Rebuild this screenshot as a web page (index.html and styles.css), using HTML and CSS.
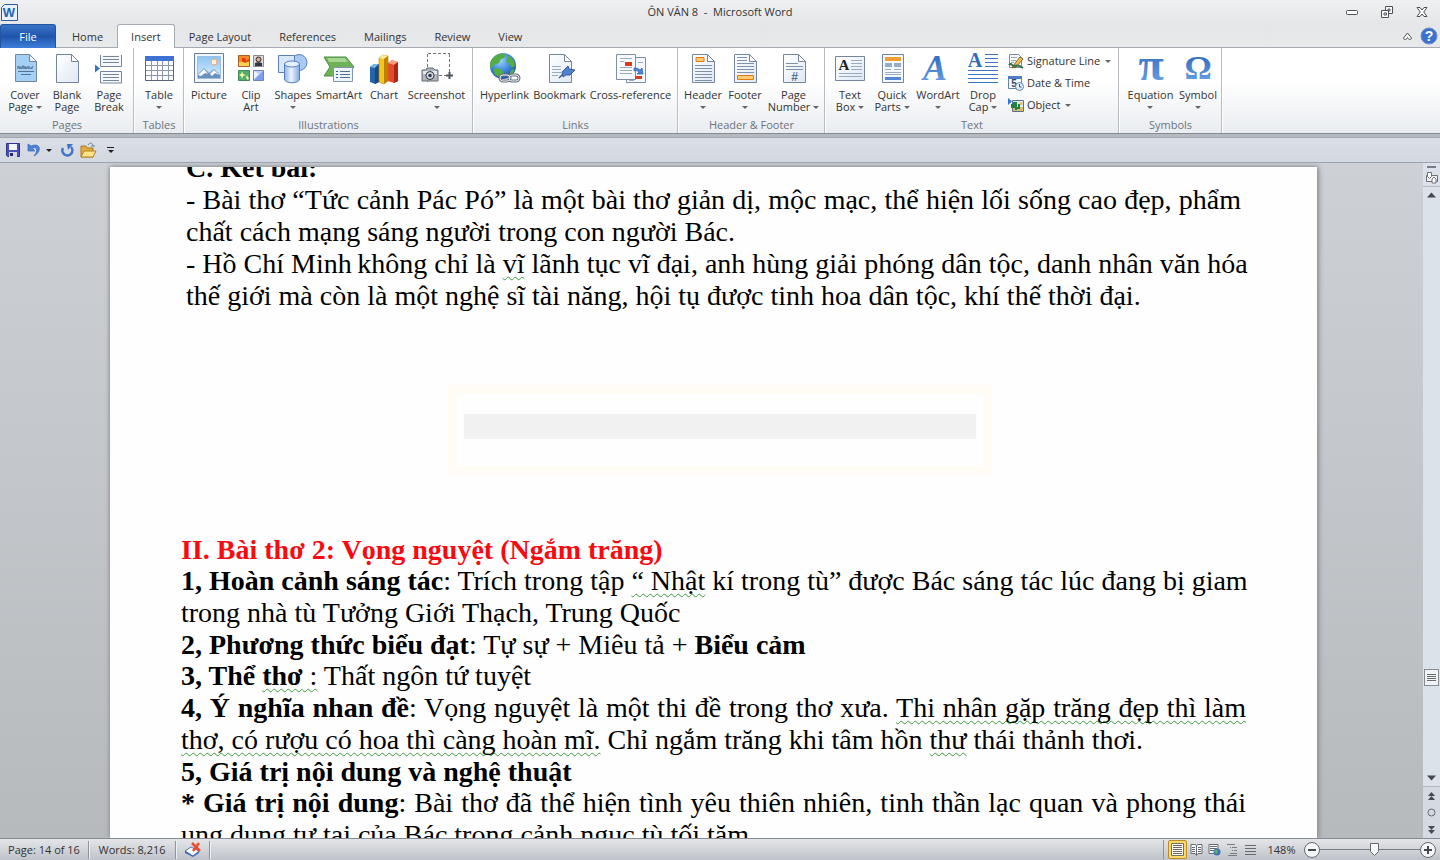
FILE: index.html
```html
<!DOCTYPE html>
<html lang="vi">
<head>
<meta charset="utf-8">
<title>ÔN VĂN 8 - Microsoft Word</title>
<link rel="stylesheet" href="styles.css">
</head>
<body>
<svg class="defs" aria-hidden="true">
  <defs>
    <linearGradient id="paper" x1="0" y1="0" x2="1" y2="1"><stop offset="0" stop-color="#fff"/><stop offset="1" stop-color="#dfe8f5"/></linearGradient>
    <linearGradient id="sky" x1="0" y1="0" x2="0" y2="1"><stop offset="0" stop-color="#8cc4f2"/><stop offset="1" stop-color="#d9efff"/></linearGradient>
    <linearGradient id="glyph" x1="0" y1="0" x2="0" y2="1"><stop offset="0" stop-color="#235fb8"/><stop offset="1" stop-color="#6fa8e8"/></linearGradient>
    <linearGradient id="steel" x1="0" y1="0" x2="1" y2="0"><stop offset="0" stop-color="#8db6ec"/><stop offset=".45" stop-color="#edf5ff"/><stop offset="1" stop-color="#7fa9e2"/></linearGradient>
    <radialGradient id="globe" cx=".4" cy=".3" r=".8"><stop offset="0" stop-color="#9cd2ff"/><stop offset=".5" stop-color="#3e86dc"/><stop offset="1" stop-color="#123e9a"/></radialGradient>
    <g id="sheet"><path d="M5.500 1.500h15l7 7v21h-22z" fill="url(#paper)" stroke="#75859c"/><path d="M20.500 1.500v7h7z" fill="#fff" stroke="#75859c"/></g>
  </defs>
</svg>

<header class="titlebar">
  <svg class="app-icon" width="17" height="17" viewBox="0 0 17 17"><path d="M3.500.5h13v16h-16v-13z" fill="#e9f2fc" stroke="#2a5c9e"/><text x="8" y="13" class="app-letter">W</text></svg>
  <h1 class="title">ÔN VĂN 8&nbsp; -&nbsp; Microsoft Word</h1>
  <div class="window-buttons">
    <button aria-label="Minimize"><svg width="14" height="14"><rect x="1.500" y="5.500" width="11" height="4" rx="1" fill="#fff" stroke="#4c5058"/></svg></button>
    <button aria-label="Restore"><svg width="14" height="14"><path d="M5.500 1.500h7v7h-7z" fill="#fff" stroke="#4c5058"/><path d="M8 4h2v2H8z" fill="#fff" stroke="#4c5058"/><path d="M1.500 5.500h7v7h-7z" fill="#fff" stroke="#4c5058"/><path d="M4 8h2.500v2H4z" fill="#fff" stroke="#4c5058"/></svg></button>
    <button aria-label="Close"><svg width="14" height="14"><path d="M2 2.500h3L7 5l2-2.500h3L8.700 7l3.300 4.500H9L7 9l-2 2.500H2L5.300 7z" fill="#fff" stroke="#4c5058"/></svg></button>
  </div>
</header>

<nav class="tabs">
  <button class="tab file">File</button>
  <button class="tab">Home</button>
  <button class="tab active">Insert</button>
  <button class="tab">Page Layout</button>
  <button class="tab">References</button>
  <button class="tab">Mailings</button>
  <button class="tab">Review</button>
  <button class="tab">View</button>
  <div class="tab-tools">
    <button aria-label="Minimize the Ribbon"><svg width="11" height="10"><path d="M1.500 7 5.500 2l4 5c0 2-3 2-4-.5C4.500 9 1.500 9 1.500 7z" fill="#fff" stroke="#4c5058"/></svg></button>
    <button aria-label="Help"><svg width="18" height="18"><circle cx="9" cy="9" r="8" fill="#3c72cf" stroke="#6d8cc2"/><text x="9" y="14" class="help-mark">?</text></svg></button>
  </div>
</nav>

<section class="ribbon">
  <div class="group">
    <div class="tools">
      <button class="tool"><svg width="32" height="32"><path d="M6.500 1.500h14l7 7v20h-21z" fill="#a4d0f6" stroke="#75859c"/><path d="M20.500 1.500v7h7z" fill="#eef6ff" stroke="#75859c"/><path d="M9 16v-3l2 3v-3m2 3v-3h2v3m1-3 1 3 2-3m1 3v-3m2 3 2-3m-14 2h14" fill="none" stroke="#54758f"/><path d="M9 18.500h16M12 21.500h10" stroke="#54758f"/></svg><span>Cover<br>Page <i class="caret"></i></span></button>
      <button class="tool"><svg width="32" height="32"><use href="#sheet"/></svg><span>Blank<br>Page</span></button>
      <button class="tool"><svg width="32" height="32"><path d="M2 11.500v8l5-4z" fill="#3873c4"/><path d="M7.500 2v11.500h21V2M7.500 30V18.500h21V30z" fill="#f5f9ff" stroke="#75859c"/><path d="M10 3.500h16M10 6.500h16M10 9.500h16M10 21.500h16M10 24.500h16M10 27.500h16" stroke="#75859c"/></svg><span>Page<br>Break</span></button>
    </div>
    <h2>Pages</h2>
  </div>
  <div class="group">
    <div class="tools">
      <button class="tool"><svg width="32" height="32"><path d="M2.500 3.500h28v24h-28z" fill="#fafcff" stroke="#56657c"/><path d="M2 3h29v5H2z" fill="#3f73d1"/><path d="M3 12.500h27M3 17.500h27M3 22.500h27M8.500 8v19M14.500 8v19M19.500 8v19M25.500 8v19" stroke="#8b98ac"/></svg><span>Table<br><i class="caret"></i></span></button>
    </div>
    <h2>Tables</h2>
  </div>
  <div class="group">
    <div class="tools">
      <button class="tool"><svg width="32" height="32"><path d="M1.500.5h29v29h-29z" fill="#f1f6fb" stroke="#6a7f97"/><path d="M4.500 3.500h23v22h-23z" fill="url(#sky)" stroke="#9ac0e4"/><circle cx="21" cy="9" r="3" fill="#fff1df" stroke="#eea476"/><path d="M5 25v-4l6-6 5 5 5-4 6 6v3z" fill="#6a91bd"/><path d="m5 22 6-6 4 5-3-1-4 3zM17 21l4-4 5 5-4-2-3 3z" fill="#fff"/></svg><span>Picture</span></button>
      <button class="tool"><svg width="32" height="32"><path d="M3.500 2.500h11v11h-11z" fill="#f48b22" stroke="#a85e28"/><path d="M4 9h10v4H4z" fill="#ffd04a"/><path d="M7 5h3l1 3 3-2v2l-4 2-3-2z" fill="#e7360e"/><path d="M18.500 2.500h10v11h-10z" fill="#d8dce2" stroke="#858b95"/><circle cx="23.500" cy="6.500" r="2.500" fill="#e9a57b" stroke="#2f2f36"/><path d="M20 13v-3l3.500-1L27 10v3z" fill="#34363d"/><path d="M3.500 17.500h11v10h-11z" fill="#53ab6d" stroke="#3f8b58"/><path d="m7 18 1 3 3 1-3 1-1 3-1-3-2-1 2-1zM12 22l1 2 1 1-1 2-2-2z" fill="#fff59b"/><path d="M18.500 17.500h10v10h-10z" fill="#bccdfa" stroke="#6d84bd"/><path d="m19 27 9-9v9z" fill="#7e9ded"/><path d="m19 18 5 3-5 5z" fill="#eff4ff"/></svg><span>Clip<br>Art</span></button>
      <button class="tool"><svg width="32" height="32"><circle cx="22" cy="9.500" r="8" fill="#a9caf3" stroke="#5980bb"/><path d="M1.500 2.500h16v17h-16z" fill="#d8e8fb" stroke="#5980bb"/><path d="M7.500 11v15c0 5 15 5 15 0V11z" fill="url(#steel)" stroke="#5980bb"/><ellipse cx="15" cy="11" rx="7.500" ry="3" fill="#e4f1ff" stroke="#5980bb"/></svg><span>Shapes<br><i class="caret"></i></span></button>
      <button class="tool wide"><svg width="32" height="32"><path d="M1 4h22l8 10-8 9H1l6-9z" fill="#6db257" stroke="#4c9041"/><path d="M4 5h18l3 4H6z" fill="#a6d691"/><path d="M10.500 14.500h19v14h-19z" fill="#edf4fc" stroke="#8195ad"/><path d="M17 18.500h10M17 21.500h10M17 24.500h10" stroke="#526d8e"/><path d="M13 18.500h2M13 21.500h2M13 24.500h2" stroke="#31588a"/></svg><span>SmartArt</span></button>
      <button class="tool narrow"><svg width="32" height="32"><path d="m2 14 4-3h5v18l-4 2-5-2z" fill="#2464ab"/><path d="m2 14 4-3h5l-4 4z" fill="#70b3ed"/><path d="m7 15 4-4v18l-4 2z" fill="#17497f"/><path d="m20 10 4-3 6 2v19l-4 2-6-2z" fill="#e54b2b"/><path d="m20 10 4-3 6 2-4 3z" fill="#ff9f85"/><path d="m26 12 4-3v19l-4 2z" fill="#ad2413"/><path d="m11 5 4-3 5 1v25l-4 3-5-2z" fill="#f8c51b" stroke="#b98208" stroke-width=".6"/><path d="m11 5 4-3 5 1-4 3z" fill="#fff193"/><path d="m16 6 4-3v25l-4 3z" fill="#bd8206"/></svg><span>Chart</span></button>
      <button class="tool widest"><svg width="32" height="32"><path d="M6.500 1v28M7 .5h22M28.500 1v20M18 22.500h13" fill="none" stroke="#6f747c" stroke-dasharray="3 2"/><path d="M28.500 19v7M25 22.500h7" stroke="#4f555e" stroke-width="2"/><path d="M1 17h4l1-2h6l2 2h3v11H1z" fill="#aeb5be" stroke="#646a73"/><path d="M2 18h14v3H2z" fill="#e7eaee"/><circle cx="9" cy="22.500" r="4" fill="#d5d9df" stroke="#31353c"/><circle cx="9" cy="22.500" r="1.800" fill="#2b3a51"/></svg><span>Screenshot<br><i class="caret"></i></span></button>
    </div>
    <h2>Illustrations</h2>
  </div>
  <div class="group">
    <div class="tools">
      <button class="tool wider"><svg width="32" height="32"><circle cx="14" cy="13" r="13" fill="url(#globe)"/><path d="M5 4c4-4 9-4 12-2l-2 3-3 1-2 4-5 2-3 4c-2-4-1-9 3-12zM19 3c5 2 7 6 7 10l-3 2-3-5-3-1 1-3zM8 15l5 2 2 4-3 4-6-3-2-6zM22 17l4-1-3 6-3 1z" fill="#54ad43"/><g fill="none" stroke="#68737f" stroke-width="3"><rect x="11" y="22" width="10" height="6" rx="3"/><rect x="20" y="22" width="10" height="6" rx="3"/></g><g fill="none" stroke="#e7edf3"><rect x="11" y="22" width="10" height="6" rx="3"/><rect x="20" y="22" width="10" height="6" rx="3"/></g></svg><span>Hyperlink</span></button>
      <button class="tool wider"><svg width="32" height="32"><use href="#sheet"/><path d="M8 13.500h9M8 16.500h9M8 19.500h9M8 22.500h6" stroke="#9aabc0"/><path d="m15 25 6-6" stroke="#475e85" stroke-width="1.500"/><path d="m18 19 6-6 1 3 6 1-5 5h-4l-3 2z" fill="#5380cd" stroke="#345faa"/></svg><span>Bookmark</span></button>
      <button class="tool xwide"><svg width="32" height="32"><path d="M11.500 4.500h19v25h-19z" fill="#f4f8fe" stroke="#7d8fa8"/><path d="M1.500 1.500h19v25h-19z" fill="#f8fbff" stroke="#7d8fa8"/><path d="M5 5.500h12M5 8.500h4M5 14.500h12M5 17.500h12M5 20.500h12M23 9.500h5M14 27.500h5" stroke="#9aabc0"/><path d="M10 9h7v4h-7zM20 23h7v3h-7z" fill="#d93f13"/><path d="M19 15c4 0 5 1 6 2l2-2 1 6h-6l2-2c-1-1-3-2-5-1z" fill="#4c83d6" stroke="#2d5fac" stroke-width=".7"/></svg><span>Cross-reference</span></button>
    </div>
    <h2>Links</h2>
  </div>
  <div class="group">
    <div class="tools">
      <button class="tool"><svg width="32" height="32"><use href="#sheet"/><path d="M9 4.500h8v4H9z" fill="#ffca79" stroke="#e27a0c"/><path d="M8 12.500h17M8 15.500h17M8 18.500h17M8 21.500h17M8 24.500h17M8 27.500h17" stroke="#7d91ab"/></svg><span>Header<br><i class="caret"></i></span></button>
      <button class="tool"><svg width="32" height="32"><use href="#sheet"/><path d="M8 4.500h10M8 7.500h10M8 10.500h17M8 13.500h17M8 16.500h17M8 19.500h17" stroke="#7d91ab"/><path d="M8.500 22.500h16v4h-16z" fill="#ffca79" stroke="#e27a0c"/></svg><span>Footer<br><i class="caret"></i></span></button>
      <button class="tool wider"><svg width="32" height="32"><use href="#sheet"/><path d="M8 10.500h12M8 13.500h17M8 16.500h17" stroke="#7d91ab"/><text x="16.500" y="28" class="hash">#</text></svg><span>Page<br>Number <i class="caret"></i></span></button>
    </div>
    <h2>Header &amp; Footer</h2>
  </div>
  <div class="group">
    <div class="tools">
      <button class="tool"><svg width="32" height="32"><path d="M1.500 3.500h29v24h-29z" fill="url(#paper)" stroke="#75859c"/><path d="M17 7.500h11M17 10.500h11M17 13.500h11M17 16.500h11M5 20.500h23M5 23.500h23" stroke="#9aabc0"/><text x="10" y="17" class="box-a">A</text></svg><span>Text<br>Box <i class="caret"></i></span></button>
      <button class="tool"><svg width="32" height="32"><path d="M6.500 1.500h21v28h-21z" fill="#f5f9ff" stroke="#75859c"/><path d="M9 4h16v4H9z" fill="#ef9f32"/><path d="M9 10h7v4H9zM18 10h7v4h-7z" fill="#96abc6"/><path d="M9 16.500h6M18 16.500h7M9 19.500h16M9 21.500h16" stroke="#9aabc0"/><path d="M9 24h16v3H9z" fill="#5485d9"/></svg><span>Quick<br>Parts <i class="caret"></i></span></button>
      <button class="tool wide"><svg width="32" height="32"><text x="13" y="27" class="word-art">A</text></svg><span>WordArt<br><i class="caret"></i></span></button>
      <button class="tool narrow"><svg width="32" height="32"><text x="8" y="14" class="drop-a">A</text><path d="M18 1.500h13M18 5.500h13M18 9.500h13M18 13.500h13M1 17.500h30M1 21.500h30M1 25.500h30M1 29.500h30" stroke="#3f75bd"/></svg><span>Drop<br>Cap <i class="caret"></i></span></button>
      <div class="mini-tools">
        <button class="mini"><svg width="16" height="16"><path d="M1.500 1.500h9l3 3v10h-12z" fill="#f6f9fd" stroke="#798aa2"/><path d="M3 4.500h6M3 7.500h5M3 9.500h3" stroke="#9aabc0"/><path d="m5 13 7-9 3 2-7 8-4 1z" fill="#f2c454" stroke="#86641b"/><path d="M1 12c2-3 3 1 5 1s4-2 9 2" fill="none" stroke="#32734c" stroke-width="2"/></svg>Signature Line <i class="caret"></i></button>
        <button class="mini"><svg width="16" height="16"><path d="M.5 1.500h13v12H.5z" fill="#f8fbff" stroke="#5f82b5"/><path d="M0 1h14v3H0z" fill="#4b7dca"/><text x="6" y="12" class="date-five">5</text><circle cx="11.500" cy="11.500" r="4" fill="#dfecfb" stroke="#6483ac"/><path d="M11.500 9v3h2" fill="none" stroke="#36598c"/></svg>Date &amp; Time</button>
        <button class="mini"><svg width="16" height="16"><path d="M4.500 3.500h11v11h-11z" fill="#dcecf7" stroke="#5a718d"/><path d="M0 1v7l4-3.500z" fill="#3474d0"/><path d="M5 10h10v4H5z" fill="#d9bb69"/><path d="M4 7v3h2V6h2v7M8 11h3V7" fill="none" stroke="#258143" stroke-width="2"/><circle cx="13" cy="6.500" r="1.500" fill="#f4b54c"/></svg>Object <i class="caret"></i></button>
      </div>
    </div>
    <h2>Text</h2>
  </div>
  <div class="group">
    <div class="tools">
      <button class="tool wider"><svg width="32" height="32"><text x="16" y="27" class="pi">π</text></svg><span>Equation<br><i class="caret"></i></span></button>
      <button class="tool narrow"><svg width="32" height="32"><text x="16" y="26" class="omega">Ω</text></svg><span>Symbol<br><i class="caret"></i></span></button>
    </div>
    <h2>Symbols</h2>
  </div>
</section>

<div class="quick-access">
  <button aria-label="Save"><svg width="16" height="16"><path d="M1.500 1.500h13v13h-12l-1-1z" fill="#4b50b8" stroke="#30348c"/><path d="M4 2h8v6H4z" fill="#f2f5ff"/><path d="M4 10h8v5H4z" fill="#d3d7e4"/><path d="M5 11h3v3H5z" fill="#262a66"/></svg></button>
  <button aria-label="Undo"><svg width="16" height="16"><path d="M2 2v7h7L6.500 6.500C10 4 13 8 8 14c8-4 7-14-3-10z" fill="#4f83d9" stroke="#3465b5" stroke-width=".7"/></svg></button>
  <button aria-label="Undo history" class="slim"><i class="caret dark"></i></button>
  <button aria-label="Repeat"><svg width="16" height="16"><path d="M4 6a5 5 0 1 0 8-1" fill="none" stroke="#3f74cb" stroke-width="2.500"/><path d="M8 2h6l-5 6z" fill="#3f74cb"/></svg></button>
  <button aria-label="Open"><svg width="16" height="16"><path d="M1 4h5l1 2h6v9H1z" fill="#e6ac3a" stroke="#ab7b21"/><path d="M4 9h12l-3 6H1z" fill="#ffe28c" stroke="#b68427"/><path d="M8 3c2-3 5-2 5 1m-2 0h4" fill="none" stroke="#6b87a8"/></svg></button>
  <button aria-label="Customize Quick Access Toolbar" class="more"><i class="bar"></i><i class="caret dark"></i></button>
</div>

<main class="workspace">
  <article class="page">
    <section class="passage upper">
      <p><b>C. Kết bài:</b></p>
      <p>- Bài thơ “Tức cảnh Pác Pó” là một bài thơ giản dị, mộc mạc, thể hiện lối sống cao đẹp, phẩm chất cách mạng sáng người trong con người Bác.</p>
      <p class="full">- Hồ Chí Minh&#8201;không chỉ là <u>vĩ</u> lãnh tục vĩ đại, anh hùng giải phóng dân tộc, danh nhân văn hóa<br>thế giới mà còn là một nghệ sĩ tài năng, hội tụ được tinh hoa dân tộc, khí thế thời đại.</p>
    </section>
    <div class="faded-frame"><div class="faded-bar"></div></div>
    <section class="passage">
      <p class="snug heading"><b>II. Bài thơ 2: Vọng nguyệt (Ngắm trăng)</b></p>
      <p class="full"><b>1, Hoàn cảnh sáng tác</b>: Trích trong tập <u>“ Nhật</u> kí trong tù” được Bác sáng tác lúc đang bị giam<br>trong nhà tù Tưởng Giới Thạch, Trung Quốc</p>
      <p class="snug"><b>2, Phương thức biểu đạt</b>: Tự sự + Miêu tả + <b>Biểu cảm</b></p>
      <p><b>3, Thể <u>thơ</u></b><u> :</u> Thất ngôn tứ tuyệt</p>
      <p><b>4, Ý nghĩa nhan đề</b>: Vọng nguyệt là một thi đề trong thơ xưa. <u>Thi nhân gặp trăng đẹp thì làm thơ, có rượu có hoa thì càng hoàn mĩ.</u> Chỉ ngắm trăng khi tâm hồn <u>thư</u> thái thảnh thơi.</p>
      <p class="snug"><b>5, Giá trị nội dung và nghệ thuật</b></p>
      <p><b>* Giá trị nội dung</b>: Bài thơ đã thể hiện tình yêu thiên nhiên, tinh thần lạc quan và phong thái ung dung tự tại của Bác trong cảnh ngục tù tối tăm.</p>
    </section>
  </article>
  <aside class="scrollbar">
    <button class="split" aria-label="Split"></button>
    <button class="ruler" aria-label="View Ruler"><svg width="13" height="13"><path d="M1.500 4.500h11v6h-11z" fill="#f1f3f5" stroke="#6c7178"/><path d="M2.500 1.500h4v4l-2 2-2-2zM7 8l2-2 2 2v4H7z" fill="#fff" stroke="#6c7178"/></svg></button>
    <button aria-label="Scroll up"><svg width="9" height="6"><path d="M0 5.500h9L4.500.5z" fill="#45494f"/></svg></button>
    <div class="track"><button class="thumb" aria-label="Scroll position"><svg width="9" height="9"><path d="M0 1.500h9M0 3.500h9M0 5.500h9M0 7.500h9" stroke="#666b72"/></svg></button></div>
    <button aria-label="Scroll down"><svg width="9" height="6"><path d="M0 .5h9l-4.500 5z" fill="#45494f"/></svg></button>
    <div class="browse">
      <button aria-label="Previous page"><svg width="7" height="8"><path d="M0 4 3.500 0 7 4zM0 8l3.500-4L7 8z" fill="#45494f"/></svg></button>
      <button aria-label="Select browse object"><svg width="9" height="9"><circle cx="4.500" cy="4.500" r="3.500" fill="#d4d8dd" stroke="#666b72"/></svg></button>
      <button aria-label="Next page"><svg width="7" height="8"><path d="M0 0h7L3.500 4zM0 4h7L3.500 8z" fill="#45494f"/></svg></button>
    </div>
  </aside>
</main>

<footer class="status">
  <button class="cell pages">Page: 14 of 16</button>
  <button class="cell words">Words: 8,216</button>
  <button class="cell proof" aria-label="Proofing errors"><svg width="18" height="17"><path d="m1 10 6-4 8 4-6 5z" fill="#f7faff" stroke="#5277b4"/><path d="m1 10 8 5v1l-8-4zM9 15l6-5v2l-6 4z" fill="#3768b5"/><path d="m8 2 8 8M15 2l-6 8" stroke="#ea4b2b" stroke-width="2.500"/></svg></button>
  <div class="views">
    <button class="view on" aria-label="Print Layout"><svg width="13" height="13"><path d="M.5.5h12v12H.5z" fill="#fff" stroke="#777058"/><path d="M2 2.500h9M2 4.500h9M2 6.500h9M2 8.500h9M2 10.500h9" stroke="#6d685a"/></svg></button>
    <button class="view" aria-label="Full Screen Reading"><svg width="13" height="13"><path d="M1 1.500h4l1.500 1 1.500-1h4v9H8l-1.500 2-1.500-2H1zM6.500 2v10" fill="#fafbfc" stroke="#666b72"/><path d="M2 4.500h3M2 6.500h3M2 8.500h3M8 4.500h3M8 6.500h3M8 8.500h3" stroke="#666b72"/></svg></button>
    <button class="view" aria-label="Web Layout"><svg width="13" height="13"><path d="M1 1.500h9v9H1z" fill="#fafbfc" stroke="#666b72"/><path d="M2 3.500h7M2 5.500h7M2 7.500h4" stroke="#666b72"/><circle cx="9" cy="9" r="3.500" fill="#3975b9"/><path d="m6 8 3-2 1 3-2 2z" fill="#61ab68"/></svg></button>
    <button class="view" aria-label="Outline"><svg width="13" height="13"><path d="M1 1.500h8M4 4.500h1M6 4.500h5M6 7.500h1M8 7.500h3M4 10.500h7M2 12.500h9" stroke="#777c83"/></svg></button>
    <button class="view" aria-label="Draft"><svg width="13" height="13"><path d="M1 2.500h11M1 5.500h11M1 8.500h11M1 11.500h11" stroke="#666b72"/></svg></button>
  </div>
  <button class="percent">148%</button>
  <button class="zoom-button" aria-label="Zoom out"><svg width="16" height="16"><circle cx="8" cy="8" r="7.500" fill="#f4f5f6" stroke="#666b72"/><path d="M4 8h8" stroke="#45494f" stroke-width="2"/></svg></button>
  <input class="zoom" type="range" aria-label="Zoom" min="0" max="100" value="55">
  <button class="zoom-button" aria-label="Zoom in"><svg width="16" height="16"><circle cx="8" cy="8" r="7.500" fill="#f4f5f6" stroke="#666b72"/><path d="M4 8h8M8 4v8" stroke="#45494f" stroke-width="2"/></svg></button>
</footer>
</body>
</html>
```

FILE: styles.css
```css
* { box-sizing: border-box; }
body {
  margin: 0;
  height: 100vh;
  display: flex;
  flex-direction: column;
  overflow: hidden;
  background: #e6e7e8;
  color: #333;
  font-family: "Open Sans", "Noto Sans", sans-serif;
  font-size: 11px;
  line-height: 12px;
}
button {
  margin: 0;
  padding: 0;
  border: 0;
  background: none;
  color: inherit;
  font: inherit;
  white-space: nowrap;
}
svg { display: block; flex: none; overflow: visible; }
h1, h2, p { margin: 0; font-weight: normal; }
.defs { position: absolute; width: 0; height: 0; }
.caret {
  display: inline-block;
  border: 3px solid transparent;
  border-top-color: #666;
  border-bottom: 0;
  vertical-align: 2px;
}
.caret.dark { border-top-color: #222; }

.titlebar {
  flex: none;
  height: 24px;
  display: grid;
  grid-template-columns: 120px 1fr 120px;
  align-items: center;
  background: linear-gradient(#eef0f1, #e4e6e8);
}
.app-icon { margin-left: 1px; }
.app-letter { font: bold 13px "Liberation Sans", sans-serif; fill: #2465b4; text-anchor: middle; }
.title { font-size: 11px; text-align: center; }
.window-buttons { display: flex; justify-content: flex-end; gap: 21px; padding-right: 11px; }

.tabs {
  flex: none;
  height: 24px;
  display: flex;
  background: linear-gradient(#e4e6e8, #e8e9ea);
  box-shadow: inset 0 -1px #a5abb2;
}
.tab { padding: 0 13px; border: 1px solid transparent; border-bottom: 0; }
.tab.file {
  width: 56px;
  margin-right: 2px;
  border-color: #24549d;
  border-radius: 3px 3px 0 0;
  background: linear-gradient(#3873c6, #2054ac 50%, #3c7fda);
  color: #fff;
}
.tab.active { border-color: #a5abb2; border-radius: 3px 3px 0 0; background: #fff; }
.tab-tools { margin-left: auto; padding-right: 2px; display: flex; align-items: center; gap: 7px; }
.help-mark { font: bold 14px "Liberation Sans", sans-serif; fill: #fff; text-anchor: middle; }

.ribbon {
  flex: none;
  height: 86px;
  display: flex;
  border-bottom: 1px solid #858b93;
  background: linear-gradient(#fff 40%, #e9ecf0);
}
.group {
  display: flex;
  flex-direction: column;
  padding: 0 3px 0 4px;
  border-right: 1px solid #b9bdc3;
  box-shadow: 1px 0 #fff;
}
.group h2 { font-size: 11px; color: #6d7480; text-align: center; }
.tools { display: flex; flex: none; height: 71px; }
.tool {
  width: 42px;
  padding-top: 5px;
  display: flex;
  flex-direction: column;
  align-items: center;
  gap: 4px;
}
.tool.narrow { width: 40px; }
.tool.wide { width: 50px; }
.tool.wider { width: 55px; }
.tool.widest { width: 65px; }
.tool.xwide { width: 87px; }
.mini-tools { width: 112px; padding: 2px 0 0 5px; display: flex; flex-direction: column; }
.mini { height: 22px; display: flex; align-items: center; gap: 3px; }
.mini .caret { margin-left: 2px; }
.hash { font: bold 12px "Liberation Sans", sans-serif; fill: #5b7192; text-anchor: middle; }
.box-a { font: bold 15px "Liberation Serif", serif; fill: #222; text-anchor: middle; }
.word-art { font: italic bold 36px "Liberation Serif", serif; fill: url(#glyph); text-anchor: middle; }
.drop-a { font: bold 20px "Liberation Serif", serif; fill: #2e6bb8; text-anchor: middle; }
.date-five { font: bold 10px "Liberation Sans", sans-serif; fill: #304a70; text-anchor: middle; }
.pi { font: bold 46px "Liberation Serif", serif; fill: url(#glyph); text-anchor: middle; }
.omega { font: bold 34px "Liberation Serif", serif; fill: url(#glyph); text-anchor: middle; }

.quick-access {
  flex: none;
  height: 29px;
  display: flex;
  align-items: center;
  gap: 5px;
  padding: 4px 5px 0;
  border-bottom: 1px solid #9ba5b2;
  background: linear-gradient(#b5b9c0 3px, #a0a7b0 3px, #a0a7b0 4px, #dadee5 4px, #d3d8e1);
}
.quick-access .slim { margin: 0 2px 0 -1px; }
.more { margin-left: 6px; display: flex; flex-direction: column; align-items: center; gap: 2px; }
.bar { width: 7px; height: 1px; background: #222; }

.workspace {
  flex: 1;
  min-height: 0;
  display: flex;
  background: linear-gradient(#cdd0d5, #b7babd);
}
.page {
  flex: 1;
  margin: 4px 106px 0 110px;
  overflow: hidden;
  background: #fefefe;
  box-shadow: 2px 0 5px #8b8f94, -1px 0 4px #96999e;
}
.passage {
  padding: 0 71px;
  color: #000;
  font: 28px/32px "Liberation Serif", serif;
  text-align: justify;
}
.passage.upper { margin-top: -15px; padding: 0 76px; }
.snug { line-height: 31px; }
.full { text-align: left; white-space: nowrap; }
.heading { color: #f80a10; }
.passage u {
  text-decoration: underline wavy #3b9b3b 1px;
  text-underline-offset: 3px;
  text-decoration-skip-ink: none;
}
.faded-frame {
  width: 544px;
  height: 90px;
  margin: 73px 0 59px 338px;
  padding: 20px 7px;
  border: 9px solid #fffcf6;
}
.faded-bar { height: 25px; background: #f2f1f2; }

.scrollbar {
  flex: none;
  width: 17px;
  display: flex;
  flex-direction: column;
  background: #dce2ea;
}
.scrollbar button { display: flex; align-items: center; justify-content: center; flex: none; height: 16px; }
.scrollbar .split { height: 5px; margin: 0 4px; border-bottom: 2px solid #777c83; }
.scrollbar .ruler { height: 19px; border-bottom: 1px solid #b4b9c0; }
.track { flex: 1; padding-top: 466px; }
.scrollbar .thumb { width: 15px; height: 17px; margin: 0 1px; border: 1px solid #868b93; background: #f1f3f5; }
.browse { border-top: 1px solid #b4b9c0; background: #d5dae2; }
.browse button { width: 17px; height: 17px; }

.status {
  flex: none;
  height: 22px;
  display: flex;
  align-items: center;
  padding-right: 4px;
  border-top: 1px solid #858b93;
  background: linear-gradient(#e3e5e9, #bfc3c9);
}
.cell { height: 18px; border-right: 1px solid #90959d; box-shadow: 1px 0 #eef0f2; }
.pages { width: 89px; }
.words { width: 87px; }
.proof { width: 34px; padding-left: 8px; }
.views { margin-left: auto; padding-left: 4px; display: flex; border-left: 1px solid #90959d; }
.view { width: 18px; height: 19px; display: flex; align-items: center; justify-content: center; }
.view.on { width: 19px; border: 1px solid #bf8b25; border-radius: 2px; background: #fbd96c; }
.percent { width: 45px; }
.zoom-button { width: 16px; }
.zoom {
  appearance: none;
  width: 100px;
  height: 16px;
  margin: 0;
  background: linear-gradient(#777c83, #777c83) center / 100% 1px no-repeat;
}
.zoom::-webkit-slider-thumb {
  appearance: none;
  width: 9px;
  height: 13px;
  background: url("data:image/svg+xml,%3Csvg xmlns='http://www.w3.org/2000/svg' width='9' height='13'%3E%3Cpath d='M.5.5h8v8l-4 4-4-4z' fill='%23f8f8f8' stroke='%23666b72'/%3E%3C/svg%3E") no-repeat;
}
```
